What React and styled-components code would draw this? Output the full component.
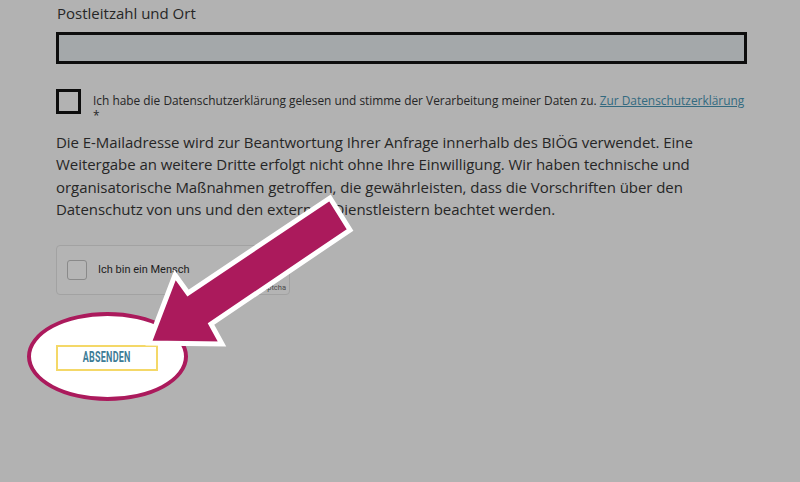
import React from 'react';
import styled, { createGlobalStyle } from 'styled-components';

const GlobalStyle = createGlobalStyle`
  html, body {
    margin: 0;
    padding: 0;
    background: #b2b2b2;
  }
  body {
    font-family: "Open Sans", "Liberation Sans", sans-serif;
    color: #262626;
  }
`;

const Page = styled('div')`
  position: relative;
  width: 800px;
  height: 482px;
  overflow: hidden;
  background: #b2b2b2;
`;

const Form = styled('form')`
  display: flex;
  flex-direction: column;
  padding: 3px 0 0 56px;
  width: 691px;
`;

const Label = styled('label')`
  font-size: 15px;
  line-height: 20px;
  margin-left: 1px;
`;

const Input = styled('div')`
  margin-top: 9px;
  height: 32px;
  box-sizing: border-box;
  border: 3px solid #0d0d0d;
  background: #a4a8aa;
`;

const ConsentRow = styled('div')`
  display: flex;
  align-items: flex-start;
  gap: 12px;
  margin-top: 25px;
`;

const Box = styled('span')`
  flex: none;
  width: 25px;
  height: 25px;
  box-sizing: border-box;
  border: 3px solid #0d0d0d;
`;

const ConsentText = styled('div')`
  font-size: 11.9px;
  line-height: 15px;
  padding-top: 4px;
`;

const Required = styled('div')`
  line-height: 12px;
  padding-top: 1px;
`;

const Link = styled('a')`
  color: #336a80;
  text-decoration: underline;
`;

const Notice = styled('p')`
  margin: 10px 0 0;
  font-size: 15px;
  line-height: 22.4px;
  letter-spacing: -0.05px;
`;

const Captcha = styled('div')`
  position: relative;
  display: flex;
  align-items: center;
  gap: 11px;
  margin-top: 24px;
  width: 234px;
  height: 50px;
  box-sizing: border-box;
  padding-left: 10px;
  border: 1px solid #a2a2a2;
  border-radius: 4px;
  background: #b4b4b4;
`;

const CaptchaBox = styled('span')`
  width: 20px;
  height: 20px;
  box-sizing: border-box;
  border: 1px solid #8a8a8a;
  border-radius: 3px;
  background: #b6b6b6;
`;

const CaptchaLabel = styled('span')`
  font-family: Roboto, "Liberation Sans", sans-serif;
  font-size: 11px;
  font-weight: 400;
  color: #1e1e1e;
`;

const CaptchaBrand = styled('span')`
  position: absolute;
  right: 3px;
  bottom: 2px;
  font-family: Roboto, "Liberation Sans", sans-serif;
  font-size: 7.5px;
  color: #4a4a4a;
`;

const Submit = styled('button')`
  position: relative;
  z-index: 2;
  align-self: flex-start;
  margin-top: 50px;
  width: 102px;
  height: 26px;
  padding: 0;
  box-sizing: border-box;
  border: 2px solid #f4d868;
  background: #fff;
  cursor: pointer;
  span {
    display: inline-block;
    font-family: Roboto, "Liberation Sans", sans-serif;
    font-weight: 700;
    font-size: 14.5px;
    letter-spacing: 0.4px;
    color: #3d7c96;
    transform: scaleX(0.62);
  }
`;

const Spotlight = styled('div')`
  position: absolute;
  z-index: 1;
  left: 27px;
  top: 312px;
  width: 161px;
  height: 89px;
  box-sizing: border-box;
  border: 4px solid #ab1a5c;
  border-radius: 50%;
  background: #fff;
`;

const Arrow = styled('svg')`
  position: absolute;
  z-index: 3;
  left: 0;
  top: 0;
  pointer-events: none;
`;

export default function App() {
  return (
    <Page>
      <GlobalStyle />
      <Spotlight />
      <Form onSubmit={e => e.preventDefault()}>
        <Label>Postleitzahl und Ort</Label>
        <Input />
        <ConsentRow>
          <Box />
          <ConsentText>
            Ich habe die Datenschutzerklärung gelesen und stimme der Verarbeitung meiner Daten zu.{' '}
            <Link href="#">Zur Datenschutzerklärung</Link>
            <Required>*</Required>
          </ConsentText>
        </ConsentRow>
        <Notice>
          Die E-Mailadresse wird zur Beantwortung Ihrer Anfrage innerhalb des BIÖG verwendet. Eine<br />
          Weitergabe an weitere Dritte erfolgt nicht ohne Ihre Einwilligung. Wir haben technische und<br />
          organisatorische Maßnahmen getroffen, die gewährleisten, dass die Vorschriften über den<br />
          Datenschutz von uns und den externen Dienstleistern beachtet werden.
        </Notice>
        <Captcha>
          <CaptchaBox />
          <CaptchaLabel>Ich bin ein Mensch</CaptchaLabel>
          <CaptchaBrand>hCaptcha</CaptchaBrand>
        </Captcha>
        <Submit type="submit"><span>ABSENDEN</span></Submit>
      </Form>
      <Arrow width="800" height="482" viewBox="0 0 800 482">
        <polygon
          points="330,198 350,230 211,324 222,344 149,343 175,275 188,293"
          fill="#ab1a5c"
          stroke="#fff"
          strokeWidth="5"
          strokeLinejoin="miter"
          strokeMiterlimit="10"
        />
      </Arrow>
    </Page>
  );
}
